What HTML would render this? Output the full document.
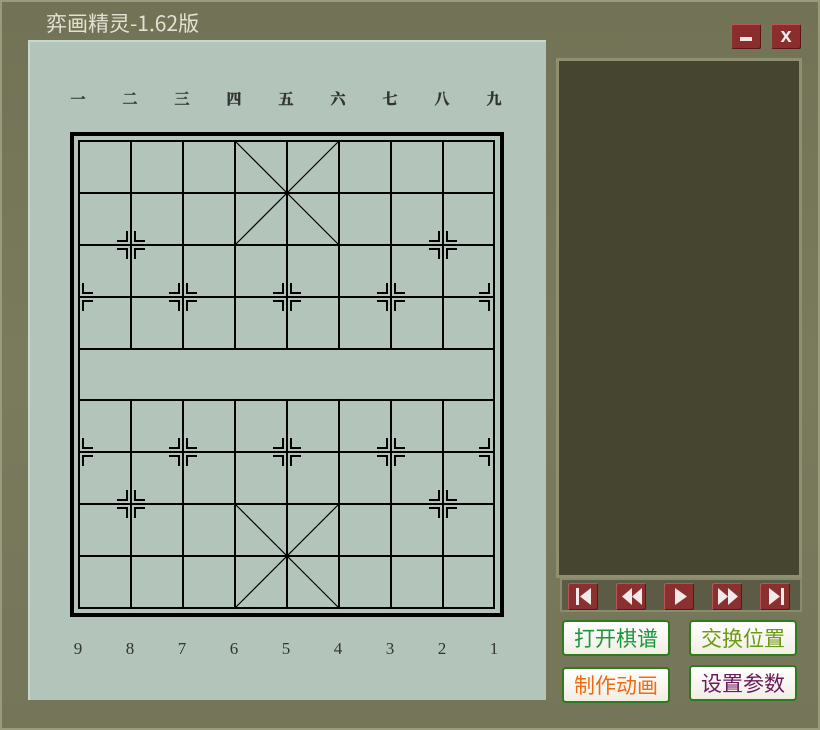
<!DOCTYPE html>
<html><head><meta charset="utf-8"><style>
body{margin:0;width:820px;height:730px;overflow:hidden;background:#77775a;font-family:"Liberation Sans","Noto Sans CJK SC",sans-serif;position:relative}
.frame{position:absolute;left:0;top:0;width:816px;height:726px;border:2px solid #9a9a7c;background:linear-gradient(180deg,#727256,#7a7a5c 50%,#75755a)}
.title{position:absolute;left:46px;top:8px;font-size:21px;color:#e2e2d2;font-family:"WenQuanYi Zen Hei","Noto Sans CJK SC",monospace}
.panel{position:absolute;left:28px;top:40px;width:518px;height:660px;background:#b3c5bb;border-top:2px solid #c8d6ce;border-left:2px solid #c8d6ce;box-sizing:border-box}
.right{position:absolute;left:556px;top:58px;width:246px;height:520px;background:#454530;border:3px solid #8f8f72;box-sizing:border-box}
.nav{position:absolute;left:560px;top:578px;width:242px;height:34px;background:#5c5c46;border:2px solid #8a8a6e;box-sizing:border-box}
.nb{position:absolute;top:583px;width:30px;height:27px;background:#8b3030;border-radius:2px;box-shadow:inset 1px 1px 0 #b35858,inset -1px -1px 0 #5c1818}
.wb{position:absolute;top:24px;width:30px;height:25px;background:#8b2d2d;border-radius:2px;box-shadow:inset 1px 1px 0 #b55,inset -1px -1px 0 #5a1818}
.btn{position:absolute;width:108px;height:36px;background:linear-gradient(#fff,#f1eee3);border:2px solid #2f7a1c;border-radius:4px;box-sizing:border-box;font-size:21px;text-align:center;line-height:32px;font-family:"WenQuanYi Zen Hei","Noto Sans CJK SC",sans-serif}
</style></head><body>
<div class="frame"></div>
<div class="title">弈画精灵-1.62版</div>
<div class="wb" style="left:731px"><div style="position:absolute;left:9px;top:13px;width:12px;height:4px;background:#f0e8e8"></div></div>
<div class="wb" style="left:771px;color:#f4eeee;font:bold 20px 'Liberation Sans';text-align:center;line-height:24px">x</div>
<div class="panel"></div>
<svg style="position:absolute;left:0;top:0" width="820" height="730">
<defs><path id="f" d="M-14 -4H-4V-14M4 -14V-4H14M-14 4H-4V14M4 14V4H14"/></defs>
<g font-family="Liberation Serif,Noto Serif CJK SC,serif" font-size="15" fill="#333" stroke="#333" stroke-width="0.5" text-anchor="middle" font-weight="bold">
<text x="78" y="104">一</text><text x="130" y="104">二</text><text x="182" y="104">三</text><text x="234" y="104">四</text><text x="286" y="104">五</text><text x="338" y="104">六</text><text x="390" y="104">七</text><text x="442" y="104">八</text><text x="494" y="104">九</text>
</g>
<g font-family="Liberation Serif,serif" font-size="17" fill="#333" text-anchor="middle">
<text x="78" y="654">9</text><text x="130" y="654">8</text><text x="182" y="654">7</text><text x="234" y="654">6</text><text x="286" y="654">5</text><text x="338" y="654">4</text><text x="390" y="654">3</text><text x="442" y="654">2</text><text x="494" y="654">1</text>
</g>
<rect x="72" y="134" width="430" height="481" fill="none" stroke="#000" stroke-width="4"/>
<g stroke="#000" stroke-width="2" fill="none">
<rect x="79" y="141" width="415" height="467"/>
<path d="M79 193H494M79 245H494M79 297H494M79 349H494M79 400H494M79 452H494M79 504H494M79 556H494"/>
<path d="M131 141V349M183 141V349M235 141V349M287 141V349M339 141V349M391 141V349M443 141V349"/>
<path d="M131 400V608M183 400V608M235 400V608M287 400V608M339 400V608M391 400V608M443 400V608"/>
</g>
<g stroke="#000" stroke-width="1.2"><path d="M235 141L339 245M339 141L235 245M235 504L339 608M339 504L235 608"/></g>
<g stroke="#000" stroke-width="2" fill="none">
<use href="#f" x="131" y="245"/><use href="#f" x="443" y="245"/>
<use href="#f" x="183" y="297"/><use href="#f" x="287" y="297"/><use href="#f" x="391" y="297"/>
<use href="#f" x="131" y="504"/><use href="#f" x="443" y="504"/>
<use href="#f" x="183" y="452"/><use href="#f" x="287" y="452"/><use href="#f" x="391" y="452"/>
<path d="M83 283V293H93M83 311V301H93M489 283V293H479M489 311V301H479"/>
<path d="M83 438V448H93M83 466V456H93M489 438V448H479M489 466V456H479"/>
</g>
</svg>
<div class="right"></div>
<div class="nav"></div>
<div class="nb" style="left:568px"></div><div class="nb" style="left:616px"></div><div class="nb" style="left:664px"></div><div class="nb" style="left:712px"></div><div class="nb" style="left:760px"></div>
<svg style="position:absolute;left:0;top:0" width="820" height="730" fill="#f2eaea">
<rect x="576" y="588" width="3" height="17"/><path d="M591 588V605L580 596.5Z"/>
<path d="M632 588V605L622 596.5ZM642 588V605L632 596.5Z"/>
<path d="M675 588V605L687 596.5Z"/>
<path d="M718 588V605L728 596.5ZM728 588V605L738 596.5Z"/>
<path d="M769 588V605L780 596.5Z"/><rect x="781" y="588" width="3" height="17"/>
</svg>
<div class="btn" style="left:562px;top:620px;color:#18973b">打开棋谱</div>
<div class="btn" style="left:689px;top:620px;color:#6c9a12">交换位置</div>
<div class="btn" style="left:562px;top:667px;color:#f06a14">制作动画</div>
<div class="btn" style="left:689px;top:665px;color:#6a1a5c">设置参数</div>
</body></html>
